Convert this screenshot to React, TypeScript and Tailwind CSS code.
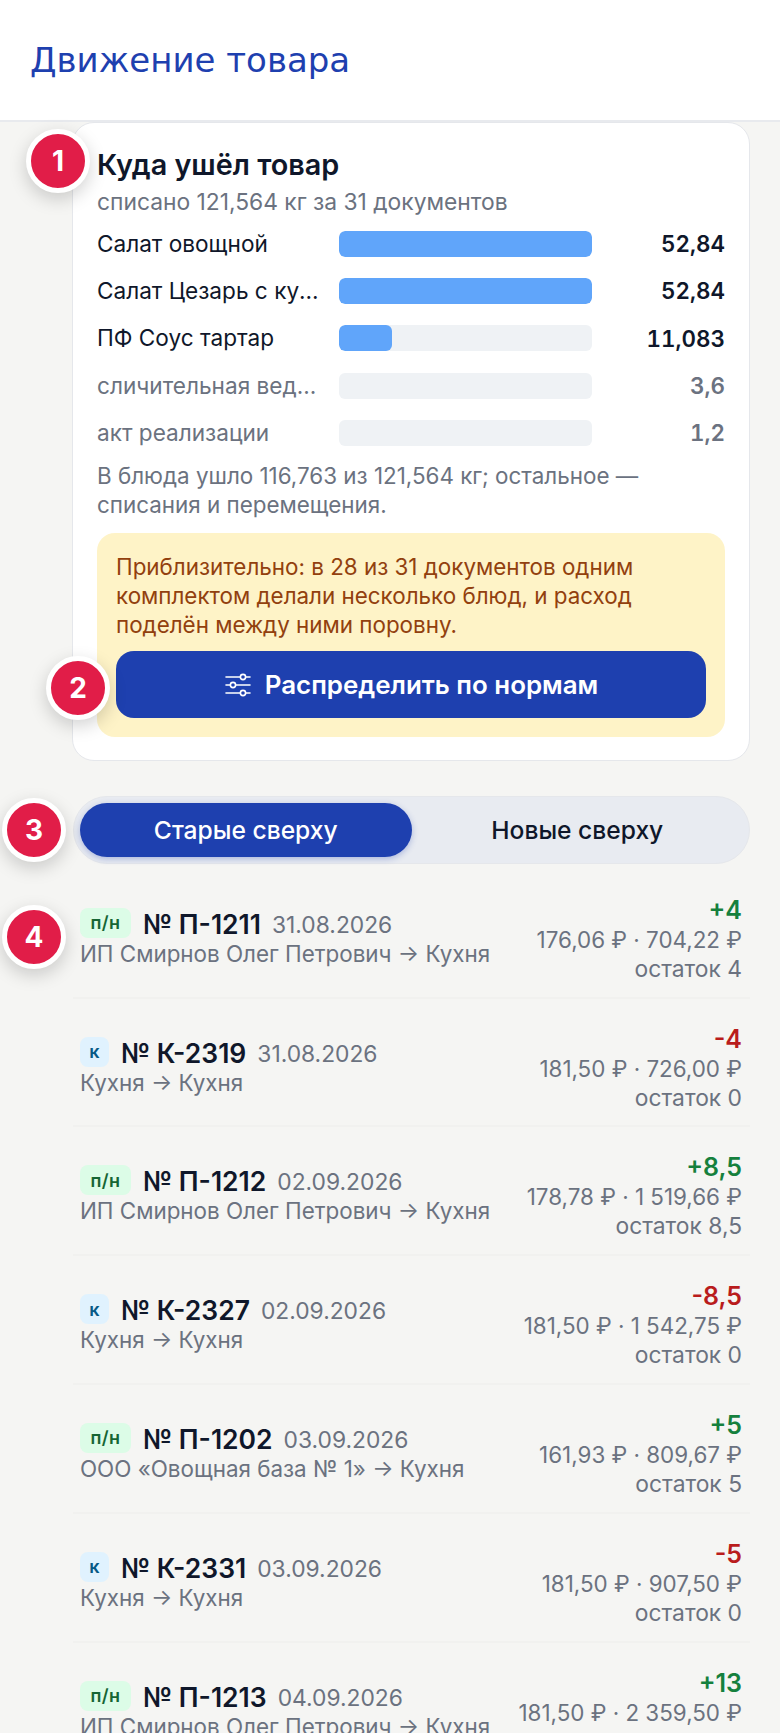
import React from 'react';

const Marker = ({ n, className }: { n: number; className: string }) => (
  <div
    className={`absolute z-10 flex h-[64px] w-[64px] items-center justify-center rounded-full border-[5px] border-white bg-[#e11d48] text-[28px] font-bold text-white shadow-[0_6px_18px_rgba(0,0,0,0.18)] ${className}`}
  >
    {n}
  </div>
);

const SlidersIcon = () => (
  <svg width="28" height="24" viewBox="0 0 28 24" fill="none" stroke="currentColor" strokeWidth="1.6" strokeLinecap="round">
    <path d="M2 4h14M22 4h4M2 12h4M12 12h14M2 20h14M22 20h4" />
    <circle cx="19" cy="4" r="2.6" />
    <circle cx="9" cy="12" r="2.6" />
    <circle cx="19" cy="20" r="2.6" />
  </svg>
);

const bars = [
  { name: 'Салат овощной', value: '52,84', pct: 100, strong: true },
  { name: 'Салат Цезарь с кукурузой', value: '52,84', pct: 100, strong: true },
  { name: 'ПФ Соус тартар', value: '11,083', pct: 21, strong: true },
  { name: 'сличительная ведомость', value: '3,6', pct: 0, strong: false },
  { name: 'акт реализации', value: '1,2', pct: 0, strong: false },
];

const docs = [
  { tag: 'п/н', num: '№ П-1211', date: '31.08.2026', route: 'ИП Смирнов Олег Петрович → Кухня', qty: '+4', sum: '176,06 ₽ · 704,22 ₽', rest: 'остаток 4' },
  { tag: 'к', num: '№ К-2319', date: '31.08.2026', route: 'Кухня → Кухня', qty: '-4', sum: '181,50 ₽ · 726,00 ₽', rest: 'остаток 0' },
  { tag: 'п/н', num: '№ П-1212', date: '02.09.2026', route: 'ИП Смирнов Олег Петрович → Кухня', qty: '+8,5', sum: '178,78 ₽ · 1 519,66 ₽', rest: 'остаток 8,5' },
  { tag: 'к', num: '№ К-2327', date: '02.09.2026', route: 'Кухня → Кухня', qty: '-8,5', sum: '181,50 ₽ · 1 542,75 ₽', rest: 'остаток 0' },
  { tag: 'п/н', num: '№ П-1202', date: '03.09.2026', route: 'ООО «Овощная база № 1» → Кухня', qty: '+5', sum: '161,93 ₽ · 809,67 ₽', rest: 'остаток 5' },
  { tag: 'к', num: '№ К-2331', date: '03.09.2026', route: 'Кухня → Кухня', qty: '-5', sum: '181,50 ₽ · 907,50 ₽', rest: 'остаток 0' },
  { tag: 'п/н', num: '№ П-1213', date: '04.09.2026', route: 'ИП Смирнов Олег Петрович → Кухня', qty: '+13', sum: '181,50 ₽ · 2 359,50 ₽', rest: 'остаток 13' },
];

const App: React.FC = () => {
  return (
    <div className="relative h-[1733px] w-[780px] overflow-hidden bg-[#f5f5f3] font-['Inter',sans-serif]">
      <header className="flex h-[122px] items-center border-b-2 border-[#e8eaee] bg-white px-[30px]">
        <h1 className="font-['DejaVu_Sans',sans-serif] text-[34px] font-normal text-[#1e40af]">Движение товара</h1>
      </header>

      <div className="pl-[72px] pr-[30px]">
        <section className="relative rounded-[22px] border border-[#e5e7eb] bg-white pb-[23px] pl-[24px] pr-[24px] pt-[25px]">
          <Marker n={1} className="left-[-47px] top-[6px]" />
          <h2 className="text-[28.8px] font-semibold leading-[33px] text-[#0f172a]">Куда ушёл товар</h2>
          <p className="mt-[6px] text-[22.8px] leading-[29px] text-[#6b7280]">списано 121,564 кг за 31 документов</p>

          <div className="mt-[15px] flex flex-col gap-[21.2px]">
            {bars.map((b) => (
              <div key={b.name + b.value} className="flex h-[26px] items-center">
                <div className={`w-[242px] truncate pr-[16px] text-[22.6px] ${b.strong ? 'text-[#0f172a]' : 'text-[#6b7280]'}`}>{b.name}</div>
                <div className="h-[26px] w-[253px] overflow-hidden rounded-[6px] bg-[#eff2f5]">
                  <div className="h-full rounded-[6px] bg-[#60a5fa]" style={{ width: `${b.pct}%` }} />
                </div>
                <div className={`flex-1 text-right text-[22.4px] font-semibold tabular-nums ${b.strong ? 'text-[#0f172a]' : 'text-[#6b7280]'}`}>{b.value}</div>
              </div>
            ))}
          </div>

          <p className="mt-[15px] text-[22.4px] leading-[29px] text-[#6b7280]">
            В блюда ушло 116,763 из 121,564 кг; остальное — списания и перемещения.
          </p>

          <div className="relative mt-[14px] rounded-[18px] bg-[#fef3c7] px-[19px] pb-[19px] pt-[19px]">
            <p className="text-[22.4px] leading-[29px] text-[#92400e]">
              Приблизительно: в 28 из 31 документов одним комплектом делали несколько блюд, и расход поделён между ними поровну.
            </p>
            <button className="mt-[12px] flex h-[67px] w-full items-center justify-center gap-[13px] rounded-[18px] bg-[#1e40af] pt-[2px] text-[25.9px] font-semibold text-white">
              <SlidersIcon />
              Распределить по нормам
            </button>
            <Marker n={2} className="left-[-51px] top-[123px]" />
          </div>
        </section>

        <div className="relative ml-[1px] mt-[35px] flex h-[68px] rounded-[34px] border border-[#e5e7eb] bg-[#e8ebf1] p-[6px]">
          <Marker n={3} className="left-[-72px] top-[1px]" />
          <div className="flex flex-1 items-center justify-center rounded-[27px] bg-[#1e40af] pt-[2px] text-[24.6px] font-medium text-white shadow-[0_2px_6px_rgba(30,64,175,0.3)]">Старые сверху</div>
          <div className="flex flex-1 items-center justify-center pt-[2px] text-[24.6px] font-medium text-[#0f172a]">Новые сверху</div>
        </div>

        <div className="relative ml-[1px] mt-[6px]">
          <Marker n={4} className="left-[-71px] top-[35px]" />
          {docs.map((d) => (
            <div key={d.num} className="flex h-[128.8px] items-start justify-between border-b-2 border-[#f1f1ef] pl-[7px] pr-[8px] pt-[26px]">
              <div className="pt-[12px]">
                <div className="flex items-center">
                  <span className={`mb-[3px] flex h-[30px] items-center justify-center rounded-[8px] text-[18px] font-semibold tracking-[0.5px] ${d.tag === 'к' ? 'w-[29px] bg-[#e0f2fe] text-[#075985]' : 'w-[51px] bg-[#dcfce7] text-[#166534]'}`}>{d.tag}</span>
                  <span className="ml-[12px] text-[26.5px] font-semibold leading-[29px] text-[#0f172a]">{d.num}</span>
                  <span className="ml-[11px] text-[22.8px] leading-[29px] text-[#6b7280]">{d.date}</span>
                </div>
                <div className="mt-[-2px] text-[22.4px] leading-[29px] text-[#6b7280]">{d.route}</div>
              </div>
              <div className="text-right">
                <div className={`text-[25px] font-semibold leading-[29px] ${d.qty.startsWith('+') ? 'text-[#15803d]' : 'text-[#b91c1c]'}`}>{d.qty}</div>
                <div className="text-[22.4px] leading-[29px] text-[#6b7280]">{d.sum}</div>
                <div className="text-[22.8px] leading-[29px] text-[#6b7280]">{d.rest}</div>
              </div>
            </div>
          ))}
        </div>
      </div>
    </div>
  );
};

export default App;
